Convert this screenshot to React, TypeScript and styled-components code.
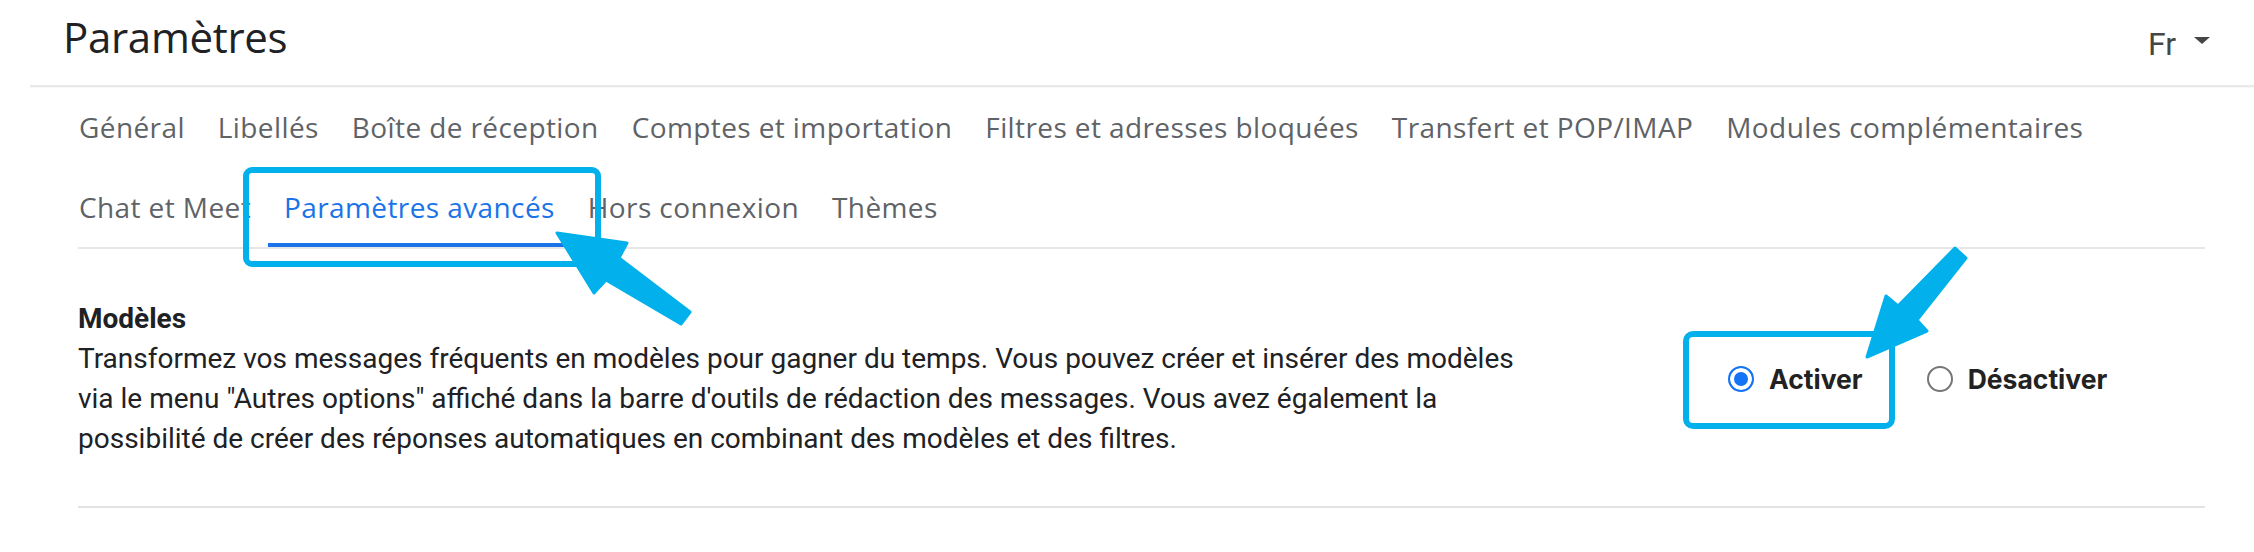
import styled, { createGlobalStyle } from "styled-components";

const tabRows = [
  [
    "Général",
    "Libellés",
    "Boîte de réception",
    "Comptes et importation",
    "Filtres et adresses bloquées",
    "Transfert et POP/IMAP",
    "Modules complémentaires",
  ],
  ["Chat et Meet", "Paramètres avancés", "Hors connexion", "Thèmes"],
];

const activeTab = "Paramètres avancés";

export default function App() {
  return (
    <Page>
      <GlobalStyle />
      <Header>
        <Title>Paramètres</Title>
        <LangButton>
          <LangText>Fr</LangText>
          <Caret />
        </LangButton>
      </Header>

      <TabsNav>
        {tabRows.map((row, i) => (
          <TabRow key={i}>
            {row.map((tab) => (
              <Tab key={tab} $active={tab === activeTab}>
                {tab}
              </Tab>
            ))}
          </TabRow>
        ))}
      </TabsNav>

      <Content>
        <SettingRow>
          <Description>
            <SettingTitle>Modèles</SettingTitle>
            Transformez vos messages fréquents en modèles pour gagner du temps. Vous pouvez créer et insérer des modèles
            <br />
            via le menu "Autres options" affiché dans la barre d'outils de rédaction des messages. Vous avez également la
            <br />
            possibilité de créer des réponses automatiques en combinant des modèles et des filtres.
          </Description>
          <Options>
            <Option>
              <Radio type="radio" name="templates" defaultChecked />
              Activer
            </Option>
            <Option>
              <Radio type="radio" name="templates" />
              Désactiver
            </Option>
          </Options>
        </SettingRow>
      </Content>

      {/* annotation layer drawn over the screenshot */}
      <Annotations width="2254" height="552" viewBox="0 0 2254 552">
        <rect x="246" y="170" width="352" height="94" rx="6" />
        <rect x="1686" y="334" width="206" height="92" rx="7" />
        <polygon points="557,233 627,243 619,258 690,312 681,324 606,280 594,293" />
        <polygon points="1867,357 1886,296 1898,306 1955,248 1966,258 1917,320 1927,331" />
      </Annotations>
    </Page>
  );
}

// Styles
const GlobalStyle = createGlobalStyle`
  body {
    margin: 0;
    background: #ffffff;
    font-family: Roboto, "Liberation Sans", sans-serif;
  }
`;

const Page = styled.div`
  position: relative;
  width: 2254px;
  height: 552px;
  overflow: hidden;
  background: #ffffff;
`;

const Header = styled.header`
  height: 85px;
  margin-left: 30px;
  padding: 0 44px 0 33px;
  display: flex;
  align-items: flex-start;
  justify-content: space-between;
  border-bottom: 2px solid #e9e9e9;
  box-shadow: 0 1px 1px rgba(0, 0, 0, 0.03);
`;

const Title = styled.h1`
  margin: 16px 0 0;
  font-family: "Open Sans", Roboto, sans-serif;
  font-weight: 400;
  font-size: 42px;
  line-height: 42px;
  color: #202124;
  letter-spacing: -0.3px;
`;

const LangButton = styled.div`
  margin-top: 28px;
  display: flex;
  align-items: flex-start;
  gap: 14px;
  color: #444746;
`;

const LangText = styled.span`
  display: inline-block;
  width: 32px;
  overflow: hidden;
  font-size: 32px;
  line-height: 32px;
`;

const Caret = styled.span`
  margin-top: 9px;
  width: 0;
  height: 0;
  border-left: 8px solid transparent;
  border-right: 8px solid transparent;
  border-top: 7px solid #444746;
`;

const TabsNav = styled.nav`
  padding-left: 63px;
`;

const TabRow = styled.div`
  height: 80px;
  display: flex;
  align-items: center;
`;

const Tab = styled.div<{ $active?: boolean }>`
  height: 80px;
  padding: 0 17px 0 16px;
  display: flex;
  align-items: center;
  font-family: "Open Sans", Roboto, sans-serif;
  font-size: 28px;
  letter-spacing: 0.4px;
  white-space: nowrap;
  color: ${(p) => (p.$active ? "#1a73e8" : "#5f6368")};
  box-shadow: ${(p) => (p.$active ? "inset 0 -4px 0 #1a73e8" : "none")};
`;

const Content = styled.main`
  margin: 0 49px 0 78px;
  border-top: 2px solid #e6e6e6;
`;

const SettingRow = styled.section`
  padding: 50px 0 47px;
  display: grid;
  grid-template-columns: 1650px 1fr;
  align-items: center;
  border-bottom: 2px solid #e3e3e3;
`;

const Description = styled.div`
  font-size: 28px;
  line-height: 40px;
  color: #202124;
  white-space: nowrap;
`;

const SettingTitle = styled.div`
  font-weight: 700;
`;

const Options = styled.div`
  display: flex;
  align-items: center;
  gap: 64px;
`;

const Option = styled.label`
  display: flex;
  align-items: center;
  gap: 15px;
  font-family: Inter, "Liberation Sans", sans-serif;
  font-weight: 700;
  font-size: 26.5px;
  line-height: 40px;
  color: #222222;
`;

const Radio = styled.input`
  appearance: none;
  margin: 0;
  width: 26px;
  height: 26px;
  border-radius: 50%;
  border: 2px solid #767676;
  background: #ffffff;

  &:checked {
    border-color: #1574f5;
    background: #1574f5;
    box-shadow: inset 0 0 0 4px #ffffff;
  }
`;

const Annotations = styled.svg`
  position: absolute;
  top: 0;
  left: 0;
  pointer-events: none;

  rect {
    fill: none;
    stroke: #02b1eb;
    stroke-width: 6;
  }

  polygon {
    fill: #02b1eb;
    stroke: #02b1eb;
    stroke-width: 3;
    stroke-linejoin: round;
  }
`;
